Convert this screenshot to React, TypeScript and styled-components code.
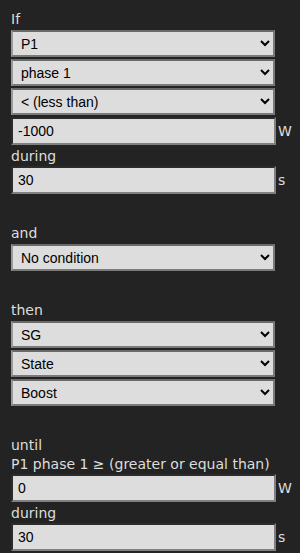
import React from "react";
import styled, { createGlobalStyle } from "styled-components";

const Global = createGlobalStyle`
  html, body {
    margin: 0;
    padding: 0;
    background: #232323;
  }
  body {
    width: 300px;
    min-height: 553px;
    overflow: hidden;
  }
`;

const Page = styled.div`
  display: flex;
  flex-direction: column;
  gap: 30px;
  padding: 10px 0 0 11px;
  font-family: "DejaVu Sans", Verdana, sans-serif;
  color: #dddddd;
`;

const Section = styled.div`
  display: flex;
  flex-direction: column;
  gap: 2px;
`;

const Label = styled.div<{ $tight?: boolean }>`
  font-size: 14px;
  line-height: 18px;
  height: 18px;
  margin-bottom: ${(p) => (p.$tight ? "-1px" : "0")};
  white-space: nowrap;
`;

const Select = styled.select`
  box-sizing: border-box;
  width: 264px;
  height: 27px;
  margin: 0;
  padding: 0 0 0 4px;
  background-color: #dddddd;
  color: #000;
  border: 2px solid #7a7a7a;
  border-top-color: #6a6a6a;
  border-left-color: #9a9a9a;
  border-radius: 0;
  font-family: "Liberation Sans", Arial, sans-serif;
  font-size: 14px;
  outline: none;
`;

const Row = styled.div`
  display: flex;
  align-items: center;
  gap: 2px;
`;

const Input = styled.input`
  box-sizing: border-box;
  width: 265px;
  height: 28px;
  margin: 0;
  padding: 0 0 0 5px;
  background: #dddddd;
  color: #000;
  border: 2px inset #808080;
  border-radius: 0;
  font-family: "Liberation Sans", Arial, sans-serif;
  font-size: 14px;
  outline: none;
`;

const Unit = styled.span`
  font-size: 14px;
  line-height: 18px;
`;

export default function App() {
  return (
    <>
      <Global />
      <Page>
        <Section>
          <Label>If</Label>
          <Select defaultValue="P1">
            <option>P1</option>
          </Select>
          <Select defaultValue="phase 1">
            <option>phase 1</option>
          </Select>
          <Select defaultValue="< (less than)">
            <option>{"< (less than)"}</option>
          </Select>
          <Row>
            <Input defaultValue="-1000" />
            <Unit>W</Unit>
          </Row>
          <Label $tight>during</Label>
          <Row>
            <Input defaultValue="30" />
            <Unit>s</Unit>
          </Row>
        </Section>
        <Section>
          <Label>and</Label>
          <Select defaultValue="No condition">
            <option>No condition</option>
          </Select>
        </Section>
        <Section>
          <Label>then</Label>
          <Select defaultValue="SG">
            <option>SG</option>
          </Select>
          <Select defaultValue="State">
            <option>State</option>
          </Select>
          <Select defaultValue="Boost">
            <option>Boost</option>
          </Select>
        </Section>
        <Section>
          <Label $tight>until</Label>
          <Label $tight>P1 phase 1 ≥ (greater or equal than)</Label>
          <Row>
            <Input defaultValue="0" />
            <Unit>W</Unit>
          </Row>
          <Label $tight>during</Label>
          <Row>
            <Input defaultValue="30" />
            <Unit>s</Unit>
          </Row>
        </Section>
      </Page>
    </>
  );
}
